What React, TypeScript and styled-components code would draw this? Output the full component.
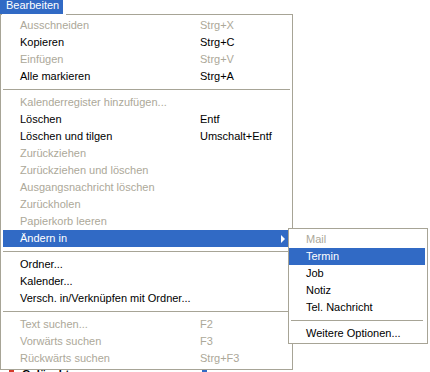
import React from 'react';
import styled, { createGlobalStyle } from 'styled-components';

//Global styles
const GlobalStyle = createGlobalStyle`
  body {
    margin: 0;
    background: #ffffff;
    font-family: 'Liberation Sans', Arial, sans-serif;
    font-size: 11px;
  }
`;

//Local styled components
const Page = styled.div`
  position: relative;
  width: 430px;
  height: 372px;
  overflow: hidden;
  background: #ffffff;
`;

const Backdrop = styled.div`
  padding-top: 367px;
`;

const BackRow = styled.div`
  display: flex;
  align-items: center;
  height: 14px;
`;

const BackIcon = styled.span<{ $color: string; $left: number }>`
  display: block;
  width: 5px;
  height: 10px;
  margin-left: ${(p) => p.$left}px;
  background: ${(p) => p.$color};
`;

const BackText = styled.span`
  margin-left: 8px;
  font-weight: bold;
  color: #000;
  width: 180px;
`;

const Dropdown = styled.div`
  position: absolute;
  top: 0;
  left: 0;
`;

const MenuTitle = styled.div`
  width: 57px;
  height: 14px;
  padding-left: 6px;
  background: #316ac5;
  color: #ffffff;
  line-height: 11px;
`;

const Menu = styled.div<{ $width: number }>`
  position: relative;
  box-sizing: border-box;
  width: ${(p) => p.$width}px;
  background: #ffffff;
  border: 1px solid #a7a496;
  padding: 2px;
`;

const MainMenu = styled(Menu)`
  &::before {
    content: '';
    position: absolute;
    top: -1px;
    left: 1px;
    width: 64px;
    height: 1px;
    background: #ffffff;
  }
`;

const SubMenu = styled(Menu)`
  position: absolute;
  top: -2px;
  left: 285px;
  padding: 2px 2px 1px 0;
  z-index: 2;
`;

const Row = styled.div<{ $active?: boolean; $disabled?: boolean }>`
  position: relative;
  display: grid;
  grid-template-columns: 197px 1fr;
  height: 17px;
  line-height: 17px;
  white-space: nowrap;
  color: ${(p) => (p.$active ? '#ffffff' : p.$disabled ? '#aca899' : '#000000')};
  background: ${(p) => (p.$active ? '#316ac5' : 'transparent')};
`;

const Label = styled.span`
  padding-left: 17px;
`;

const Shortcut = styled.span``;

const Arrow = styled.span`
  position: absolute;
  right: 5px;
  top: 5px;
  width: 0;
  height: 0;
  border-left: 4px solid #ffffff;
  border-top: 4px solid transparent;
  border-bottom: 4px solid transparent;
`;

const Separator = styled.div<{ $inset?: number }>`
  height: 9px;
  display: flex;
  align-items: center;
  padding: 0 ${(p) => p.$inset || 0}px;

  &::after {
    content: '';
    flex: 1;
    height: 1px;
    background: #a7a496;
  }
`;

type Item = { label: string; shortcut?: string; disabled?: boolean } | 'sep';

const topItems: Item[] = [
  { label: 'Ausschneiden', shortcut: 'Strg+X', disabled: true },
  { label: 'Kopieren', shortcut: 'Strg+C' },
  { label: 'Einfügen', shortcut: 'Strg+V', disabled: true },
  { label: 'Alle markieren', shortcut: 'Strg+A' },
  'sep',
  { label: 'Kalenderregister hinzufügen...', disabled: true },
  { label: 'Löschen', shortcut: 'Entf' },
  { label: 'Löschen und tilgen', shortcut: 'Umschalt+Entf' },
  { label: 'Zurückziehen', disabled: true },
  { label: 'Zurückziehen und löschen', disabled: true },
  { label: 'Ausgangsnachricht löschen', disabled: true },
  { label: 'Zurückholen', disabled: true },
  { label: 'Papierkorb leeren', disabled: true },
];

const bottomItems: Item[] = [
  'sep',
  { label: 'Ordner...' },
  { label: 'Kalender...' },
  { label: 'Versch. in/Verknüpfen mit Ordner...' },
  'sep',
  { label: 'Text suchen...', shortcut: 'F2', disabled: true },
  { label: 'Vorwärts suchen', shortcut: 'F3', disabled: true },
  { label: 'Rückwärts suchen', shortcut: 'Strg+F3', disabled: true },
];

const subItems: Item[] = [
  { label: 'Mail', disabled: true },
  { label: 'Termin' },
  { label: 'Job' },
  { label: 'Notiz' },
  { label: 'Tel. Nachricht' },
  'sep',
  { label: 'Weitere Optionen...' },
];

const renderItems = (items: Item[], active?: string, inset?: number) =>
  items.map((item, i) =>
    item === 'sep' ? (
      <Separator key={i} $inset={inset} />
    ) : (
      <Row key={i} $disabled={item.disabled} $active={item.label === active}>
        <Label>{item.label}</Label>
        {item.shortcut && <Shortcut>{item.shortcut}</Shortcut>}
      </Row>
    )
  );

const App = () => {
  return (
    <Page>
      <GlobalStyle />

      <Backdrop>
        <BackRow>
          <BackIcon $color="#d43a2a" $left={9} />
          <BackText>Gelöscht</BackText>
          <BackIcon $color="#316ac5" $left={0} />
        </BackRow>
      </Backdrop>

      <Dropdown>
        <MenuTitle>Bearbeiten</MenuTitle>

        <MainMenu $width={293}>
          {renderItems(topItems)}

          <Row $active>
            <Label>Ändern in</Label>
            <Arrow />
            <SubMenu $width={140}>{renderItems(subItems, 'Termin', 2)}</SubMenu>
          </Row>

          {renderItems(bottomItems)}
        </MainMenu>
      </Dropdown>
    </Page>
  );
};

export default App;
